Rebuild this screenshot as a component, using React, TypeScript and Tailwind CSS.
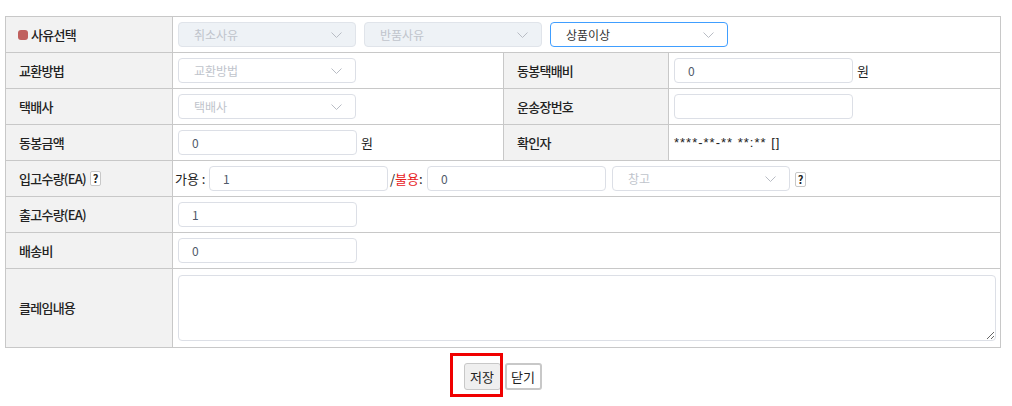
import { useState } from "react";

const font = { fontFamily: '"Noto Sans CJK KR", "Noto Sans", sans-serif' };

function Chevron() {
  return (
    <svg width="11" height="6" viewBox="0 0 11 6" className="absolute right-[13px] top-1/2 -translate-y-1/2">
      <path d="M0.5 0.5 L5.5 5.5 L10.5 0.5" fill="none" stroke="#b8bcc4" strokeWidth="1" />
    </svg>
  );
}

function Select({ label, disabled, active, w = "w-[178px]" }: { label: string; disabled?: boolean; active?: boolean; w?: string }) {
  const box = disabled
    ? "bg-[#eef2f6] border-[#e0e4ea] text-[#c0c4cc]"
    : active
      ? "bg-white border-[#409eff] text-[#333]"
      : "bg-white border-[#dcdfe6] text-[#c0c4cc]";
  return (
    <div className={`relative h-[25px] ${w} rounded-[4px] border ${box} flex items-center pl-[15px] text-[12px]`}>
      {label}
      <Chevron />
    </div>
  );
}

function Input({ value = "", w = "w-[179px]" }: { value?: string; w?: string }) {
  return (
    <div className={`h-[25px] ${w} rounded-[4px] border border-[#dcdfe6] bg-white flex items-center pl-[13px] text-[12px] text-[#505a6a]`}>
      {value}
    </div>
  );
}

function Help() {
  return (
    <span className="inline-flex items-center justify-center w-[11px] h-[15px] border border-[#c8c8c8] rounded-[2px] text-[11px] font-bold text-[#222] leading-none bg-white tracking-normal">
      ?
    </span>
  );
}

const th = "bg-[#f2f2f2] text-left font-medium text-[13px] tracking-[-0.75px] text-[#222] pl-[13px] border border-[#c8c8c8]";
const td = "pl-[5px] border border-[#c8c8c8] text-[13px] text-[#222]";

export default function App() {
  const [memo, setMemo] = useState("");
  return (
    <div className="w-[1012px] h-[406px] bg-white pt-[16px] pl-[5px]" style={font}>
      <table className="border-collapse table-fixed w-[995px]">
        <colgroup>
          <col className="w-[167px]" />
          <col className="w-[331px]" />
          <col className="w-[165px]" />
          <col className="w-[332px]" />
        </colgroup>
        <tbody>
          <tr className="h-[36px]">
            <th className={th}>
              <span className="flex items-center gap-[3px] -ml-[1px]">
                <span className="w-[10px] h-[10px] rounded-[3px] bg-[#c0605e]" />
                사유선택
              </span>
            </th>
            <td className={td} colSpan={3}>
              <div className="flex gap-[8px]">
                <Select label="취소사유" disabled />
                <Select label="반품사유" disabled />
                <Select label="상품이상" active />
              </div>
            </td>
          </tr>
          <tr className="h-[36px]">
            <th className={th}>교환방법</th>
            <td className={td}><Select label="교환방법" /></td>
            <th className={th}>동봉택배비</th>
            <td className={td}>
              <div className="flex items-center gap-[4px]"><Input value="0" /><span>원</span></div>
            </td>
          </tr>
          <tr className="h-[36px]">
            <th className={th}>택배사</th>
            <td className={td}><Select label="택배사" /></td>
            <th className={th}>운송장번호</th>
            <td className={td}><Input /></td>
          </tr>
          <tr className="h-[36px]">
            <th className={th}>동봉금액</th>
            <td className={td}>
              <div className="flex items-center gap-[4px]"><Input value="0" /><span>원</span></div>
            </td>
            <th className={th}>확인자</th>
            <td className={`${td} text-[12px] tracking-[1px] pl-[1px]`} style={{ fontFamily: '"Liberation Sans", sans-serif' }}>****-**-** **:** []</td>
          </tr>
          <tr className="h-[36px]">
            <th className={th}>
              <span className="flex items-center gap-[4px]">입고수량(EA)<Help /></span>
            </th>
            <td className={td} colSpan={3}>
              <div className="flex items-center -ml-[3px]">
                <span className="w-[34px]">가용 :</span>
                <Input value="1" />
                <span className="ml-[2px] w-[37px]">/<span className="text-[#e8201c]">불용</span>:</span>
                <Input value="0" />
                <div className="ml-[6px]"><Select label="창고" /></div>
                <div className="ml-[5px]"><Help /></div>
              </div>
            </td>
          </tr>
          <tr className="h-[36px]">
            <th className={th}>출고수량(EA)</th>
            <td className={td} colSpan={3}><Input value="1" /></td>
          </tr>
          <tr className="h-[36px]">
            <th className={th}>배송비</th>
            <td className={td} colSpan={3}><Input value="0" /></td>
          </tr>
          <tr className="h-[79px]">
            <th className={th}>클레임내용</th>
            <td className={`${td} pr-[4px]`} colSpan={3}>
              <textarea
                value={memo}
                onChange={(e) => setMemo(e.target.value)}
                className="block w-[818px] h-[66px] rounded-[4px] border border-[#dcdfe6] bg-white outline-none"
              />
            </td>
          </tr>
        </tbody>
      </table>

      {/* Buttons */}
      <div className="flex justify-center gap-[4px] mt-[15px] w-[995px]">
        <div className="relative">
          <button className="h-[27px] w-[37px] rounded-[3px] border border-[#c8c8c8] bg-[#efefef] text-[13px] text-[#222]">저장</button>
          <div className="absolute -left-[14px] -top-[10px] w-[53px] h-[44px] border-[3px] border-[#f00000]" />
        </div>
        <button className="h-[27px] w-[37px] rounded-[3px] border-2 border-[#c8c8c8] bg-white text-[13px] text-[#222]">닫기</button>
      </div>
    </div>
  );
}
